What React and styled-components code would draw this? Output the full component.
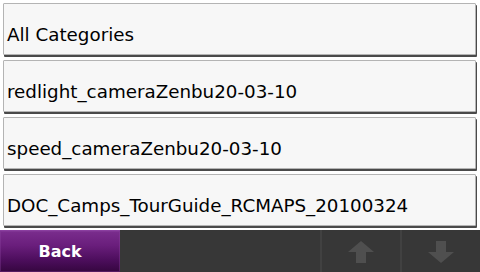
import React from "react";
import styled, { createGlobalStyle } from "styled-components";

const Global = createGlobalStyle`
  html, body { margin: 0; padding: 0; background: #ffffff; }
  body { width: 480px; height: 272px; overflow: hidden; font-family: "DejaVu Sans", "Liberation Sans", sans-serif; }
`;

const Screen = styled.div`
  width: 480px;
  height: 272px;
  display: flex;
  flex-direction: column;
  background: #ffffff;
`;

const List = styled.div`
  flex: 1;
  display: flex;
  flex-direction: column;
  gap: 5px;
  padding: 3px 4px 0 3px;
`;

const Item = styled.button`
  height: 52px;
  box-sizing: border-box;
  display: flex;
  align-items: center;
  padding: 10px 0 0 3px;
  background: #f7f7f7;
  border: 1px solid #b4b4b4;
  border-radius: 1px;
  box-shadow: 1px 2px 0 #4a4a4a;
  font-family: "DejaVu Sans", sans-serif;
  font-size: 18.3px;
  color: #000;
  text-align: left;
  cursor: pointer;
`;

const Bar = styled.div`
  height: 42px;
  display: flex;
  background: #373737;
`;

const BackButton = styled.button`
  width: 120px;
  height: 42px;
  box-sizing: border-box;
  border: none;
  border-top: 1px solid #8b3fa0;
  background: linear-gradient(#7a2d8d 0%, #6a1e7c 35%, #4d0e5d 70%, #35063f 100%);
  box-shadow: inset 0 0 0 1px rgba(140, 70, 160, 0.35);
  color: #fff;
  font-family: "DejaVu Sans", sans-serif;
  font-weight: bold;
  font-size: 16px;
  padding: 0;
`;

const Spacer = styled.div`
  flex: 1;
`;

const ArrowButton = styled.div`
  width: 80px;
  display: flex;
  align-items: center;
  justify-content: center;
  border-left: 2px solid #414141;
  box-sizing: border-box;
  padding-top: 2px;
`;

const Arrow = ({ down }) => (
  <svg width="28" height="24" viewBox="0 0 28 24" style={down ? { transform: "rotate(180deg)" } : undefined}>
    <path d="M14 1 L27 12 L19 12 L19 23 L9 23 L9 12 L1 12 Z" fill="#4f4f4f" />
  </svg>
);

const items = [
  "All Categories",
  "redlight_cameraZenbu20-03-10",
  "speed_cameraZenbu20-03-10",
  "DOC_Camps_TourGuide_RCMAPS_20100324",
];

export default function App() {
  return (
    <>
      <Global />
      <Screen>
        <List>
          {items.map((t) => (
            <Item key={t}>{t}</Item>
          ))}
        </List>
        <Bar>
          <BackButton>Back</BackButton>
          <Spacer />
          <ArrowButton>
            <Arrow />
          </ArrowButton>
          <ArrowButton>
            <Arrow down />
          </ArrowButton>
        </Bar>
      </Screen>
    </>
  );
}
